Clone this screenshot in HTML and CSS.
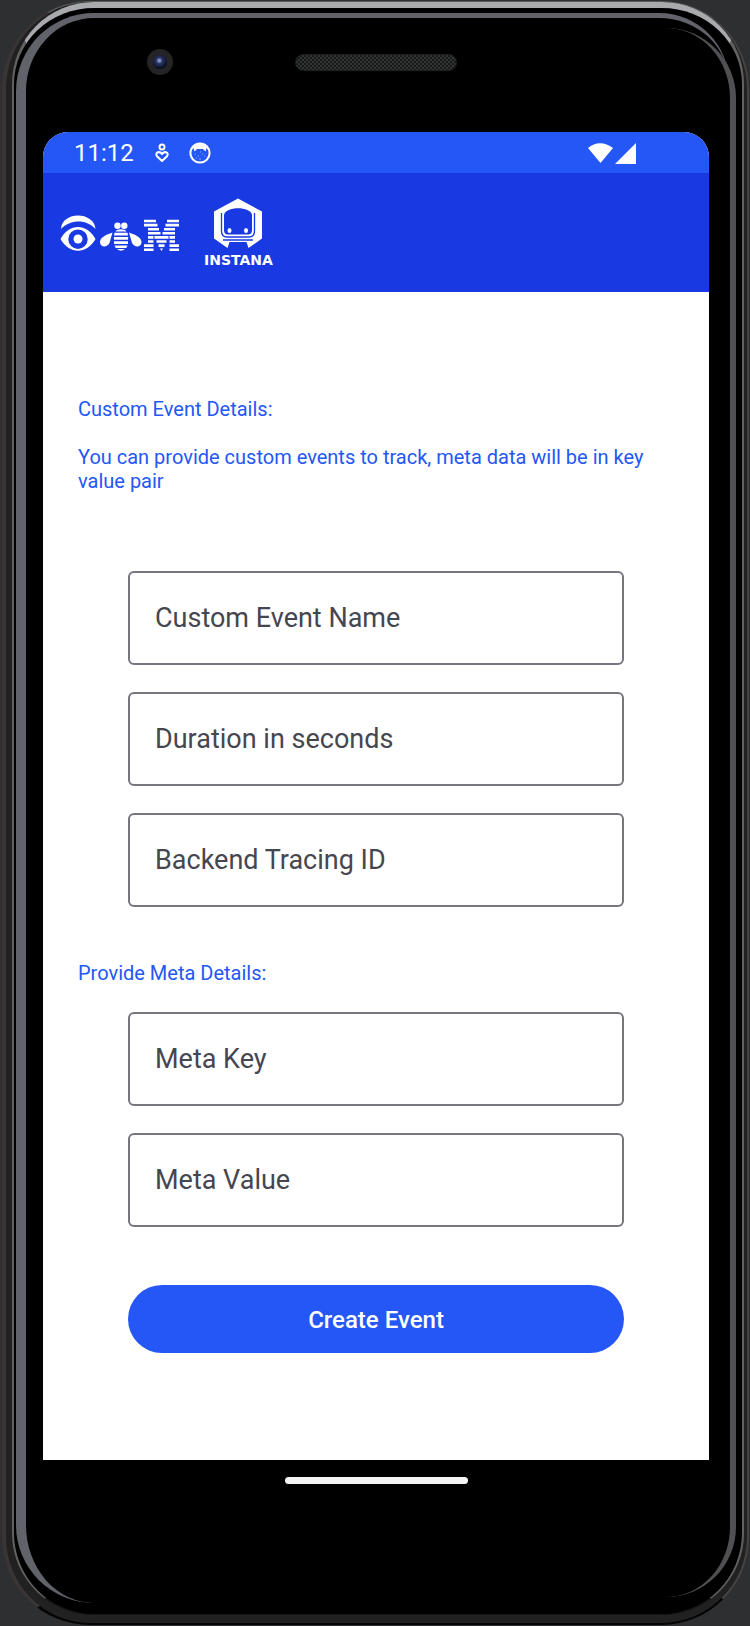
FILE: index.html
```html
<!DOCTYPE html>
<html lang="en">
<head>
<meta charset="utf-8">
<meta name="viewport" content="width=device-width, initial-scale=1">
<title>Custom Event</title>
<link rel="stylesheet" href="styles.css">
</head>
<body>
<div class="phone">
  <div class="rim"></div>
  <div class="glare glare-left"></div>
  <div class="glare glare-right"></div>
  <div class="bezel">
    <div class="camera"></div>
    <div class="speaker"></div>
  </div>
  <div class="screen">
    <div class="status">
      <span class="time">11:12</span>
      <svg class="status-icon" width="14" height="20" viewBox="0 0 14 20" fill="none" stroke="#fff" stroke-width="2">
        <circle cx="7" cy="4" r="2.5"/>
        <path d="M7 18 2 13.2C-.5 10 4 7.300 7 11 10 7.300 14.500 10 12 13.200Z" stroke-linejoin="round"/>
      </svg>
      <svg class="status-icon" width="22" height="22" viewBox="0 0 22 22">
        <circle cx="11" cy="11" r="9.600" fill="none" stroke="#fff" stroke-width="2"/>
        <path d="M3 8C4 4 7 1.500 11 1.500S18 4 19 8L17.500 6 16.500 9.500 14 7H8L5.500 9.500 4.500 6Z" fill="#fff"/>
        <path d="M6 12h1M9 14h1M13 12h1M15 14h1M10 17h2M7 16h1M11 10h1" stroke="#fff" opacity=".5"/>
      </svg>
      <svg class="signal" width="50" height="22" viewBox="0 0 50 22" fill="#fff">
        <path d="M1 6C8-.5 18-.5 26 6L13.500 21Z"/>
        <path d="M49 1V22H28Z"/>
      </svg>
    </div>
    <header class="appbar">
      <svg class="ibm" width="120" height="38" viewBox="60 213 120 38" fill="#fff" role="img" aria-label="Eye Bee M">
        <path d="M61 228C62 210 94 210 95.500 228C87 218 70 218 61 228Z"/>
        <path fill-rule="evenodd" d="M60.500 238C69 222 87 222 95.500 238C87 253.500 69 253.500 60.500 238ZM78 228.500A9.700 9.700 0 1 0 78 247.900A9.700 9.700 0 1 0 78 228.500Z"/>
        <circle cx="78" cy="238" r="4.500"/>
        <circle cx="117.500" cy="224.700" r="3.200"/><circle cx="124.300" cy="224.700" r="3.200"/>
        <path d="M115.500 230.500C117 227.500 125 227.500 126.500 230.500Z"/>
        <path d="M112.500 231.500C108 233 100 236 100 241C100 246.500 107 247 109.500 242ZM129 231.500C133.500 233 141.500 236 141.500 241C141.500 246.500 134.500 247 132 242Z"/>
        <path d="M114.500 231.700H127.500L128 234.500H114ZM113.800 236H128.200L128 238.700H114ZM114 240.200H128V242.900H114ZM114.500 244.400H127.500L126.300 247H115.700ZM117 248H125Q121 251.500 117 248Z"/>
        <path d="M144 218.700h12v2.600h-12zM167 218.700h12v2.600h-12zM144 222.800h13.500v2.600h-13.500zM165.500 222.800h13.500v2.600h-13.500zM148 226.900h11v2.600h-11zM164 226.900h11v2.600h-11zM148 231h12.500v2.600h-12.500zM162.500 231h12.500v2.600h-12.500zM148 235.100h5.500v2.600h-5.500zM154.500 235.100h14v2.600h-14zM169.500 235.100h5.500v2.600h-5.500zM148 239.200h5.500v2.600h-5.500zM156.500 239.200h10v2.600h-10zM169.500 239.200h5.500v2.600h-5.500zM144 243.300h9.500v2.600h-9.500zM158.500 243.300h6v2.600h-6zM169.500 243.300h9.500v2.600h-9.500zM144 247.400h9.500v2.600h-9.500zM169.500 247.400h9.500v2.600h-9.500zM160 247.400h3l-1.500 2.600z"/>
      </svg>
      <div class="instana">
        <svg width="50" height="52" viewBox="214 198 50 52">
          <path fill="#fff" d="M239 198.500 263 211.500V238.500L249.500 248 247.500 242H230.500L228.500 248 215 238.500V211.500Z"/>
          <path fill="#193ae2" d="M225 215C226 206 252 206 253 215V230Q253 234.500 249 234.500H229Q225 234.500 225 230Z"/>
          <path fill="none" stroke="#193ae2" stroke-width="1.300" d="M222.500 213V231Q222.500 237 228 237H250Q255.500 237 255.500 231V213"/>
          <path fill="none" stroke="#193ae2" stroke-width="1.300" d="M224 240H254"/>
          <ellipse cx="230.500" cy="230.500" rx="2" ry="2.500" fill="#fff"/><ellipse cx="247" cy="230.500" rx="2" ry="2.500" fill="#fff"/>
        </svg>
        <span class="wordmark">INSTANA</span>
      </div>
    </header>
    <main>
      <form class="form">
        <p class="note">Custom Event Details:</p>
        <p class="note">You can provide custom events to track, meta data will be in key value pair</p>
        <div class="fields event-fields">
          <input class="field" type="text" aria-label="Custom Event Name" placeholder="Custom Event Name">
          <input class="field" type="text" aria-label="Duration in seconds" placeholder="Duration in seconds">
          <input class="field" type="text" aria-label="Backend Tracing ID" placeholder="Backend Tracing ID">
        </div>
        <p class="note">Provide Meta Details:</p>
        <div class="fields meta-fields">
          <input class="field" type="text" aria-label="Meta Key" placeholder="Meta Key">
          <input class="field" type="text" aria-label="Meta Value" placeholder="Meta Value">
        </div>
        <button class="create" type="button">Create Event</button>
      </form>
    </main>
  </div>
  <div class="navbar"><div class="home"></div></div>
</div>
</body>
</html>
```
FILE: styles.css
```css
* { box-sizing: border-box; }
body {
  margin: 0;
  background: #2e2f31;
  font-family: Roboto, "Liberation Sans", sans-serif;
}
.phone {
  position: relative;
  margin: 1px 1px 0 2px;
  padding: 0 38px 0 37px;
  border-style: solid;
  border-width: 1px 2px 2px 4px;
  border-color: #5a5858 #454242 #050505 #393535;
  border-radius: 88px;
  background: #212121;
}
.rim {
  position: absolute;
  inset: 0 3px 8px 6px;
  border-style: solid;
  border-width: 6px 2px 1px 2px;
  border-color: #a9aaae #626264 #161616 #626264;
  border-radius: 82px;
  background: #000;
}
.glare {
  position: absolute;
  border: 0 solid #62636a;
}
.glare-left {
  inset: 11px 18px 20px 10px;
  border-left-width: 10px;
  border-top-width: 5px;
  border-radius: 78px 70px 70px 78px;
}
.glare-right {
  inset: 26px 11px 26px 600px;
  border-right-width: 6px;
  border-color: #505053;
  border-radius: 0 70px 70px 0;
}
.bezel {
  position: relative;
  display: grid;
  grid-template-columns: 1fr 162px 1fr;
  align-items: center;
  height: 130px;
  padding-bottom: 10px;
}
.camera {
  width: 26px;
  height: 26px;
  margin-left: 104px;
  border: 6px solid #242426;
  border-radius: 50%;
  background: radial-gradient(circle at 45% 40%, #8795bd 0 1px, #2a3566 3px, #161d40 6px, #0a0c18 8px);
}
.speaker {
  height: 17px;
  border: 1px solid #1f1f1f;
  border-radius: 9px;
  background: repeating-conic-gradient(#333434 0 25%, #171818 0 50%) 0 0 / 4px 4px;
}
.screen {
  position: relative;
  overflow: hidden;
  border-radius: 25px 25px 0 0;
  background: #fff;
}
.status {
  display: flex;
  align-items: center;
  height: 41px;
  padding: 0 72px 0 31px;
  background: #2457f5;
  color: #fff;
}
.time { font-size: 24px; line-height: 30px; margin-right: 21px; }
.status-icon { margin-right: 20px; }
.signal { margin-left: auto; }
.appbar {
  display: flex;
  align-items: center;
  gap: 24px;
  height: 119px;
  padding: 0 17px;
  background: #193ae2;
  color: #fff;
}
.instana { display: flex; flex-direction: column; align-items: center; gap: 3px; }
.wordmark { font: bold 14px/14px "DejaVu Sans", sans-serif; }
.form { padding: 105px 35px 107px; }
.note { margin: 0 0 24px; color: #2457f5; font-size: 20px; line-height: 24px; }
.fields { display: grid; gap: 27px; margin: 0 50px; }
.event-fields { margin-top: 78px; margin-bottom: 54px; }
.meta-fields { margin-top: 27px; margin-bottom: 58px; }
.field {
  width: 100%;
  height: 94px;
  padding: 0 25px;
  border: 2px solid #777680;
  border-radius: 6px;
  background: #fff;
  color: #46464f;
  font: 27px/32px Roboto, "Liberation Sans", sans-serif;
}
.field::placeholder { color: #46464f; opacity: 1; }
.create {
  display: block;
  width: calc(100% - 100px);
  height: 68px;
  margin: 0 50px;
  padding: 2px 0 0;
  border: 0;
  border-radius: 34px;
  background: #2457f5;
  color: #fff;
  font: 500 24px/28px Roboto, "Liberation Sans", sans-serif;
}
.navbar { position: relative; height: 163px; padding-top: 17px; }
.home { width: 183px; height: 7px; margin: 0 auto; border-radius: 4px; background: #f4f4f4; }
```
